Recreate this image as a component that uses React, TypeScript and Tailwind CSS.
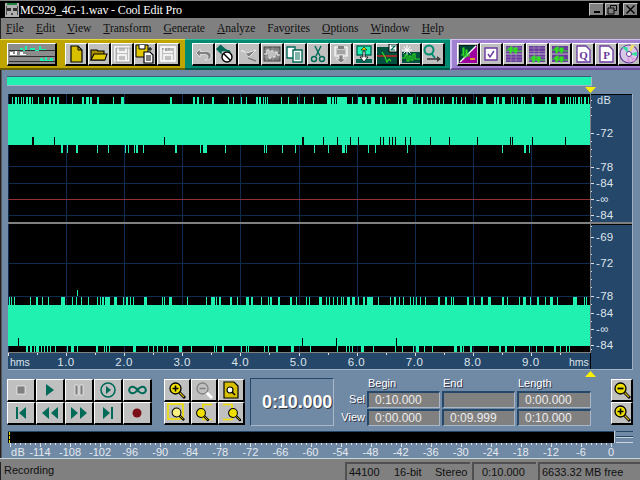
import type { ReactNode } from 'react'

type Tick = number | [number, number]

const MINT = '#20f0b0'
const GRID = '#0f2c50'

const topUpper: Tick[] = [12, [15, 2], 18, 21, 23, [26, 2], [29, 2], 32, 38, 44, [49, 2], [53, 2], [57, 2], 72, [82, 2], [86, 3], [90, 2], [97, 2], 113, [121, 3], [170, 2], [193, 2], [197, 2], 203, [212, 2], 228, 233, 241, 246, [256, 2], [259, 2], 263, 265, 267, 281, 288, 297, 304, 313, [327, 4], [332, 2], 335, [337, 10], 352, [358, 4], [365, 2], [371, 4], [380, 2], 385, 398, [401, 2], [407, 6], 417, [421, 2], 427, 431, 435, 439, 443, [452, 2], 456, 461, 465, 476, [483, 3], [494, 2], [497, 2], [502, 3], 511, 513, 517, [521, 2], 524, [531, 3], [545, 2], [549, 2], [557, 3], 565, 568, 570, 573, 575, [578, 2], 581, [584, 2], 588]
const topNotch: Tick[] = [[32, 2], 54, 164, [302, 2], 323, 337, 350, 358, 380, 383, 389, 392, 395, 405, 410, 430, 449, 477, 510, 512, 532, 565]
const topLower: Tick[] = [[61, 2], [66, 2], [76, 2], 97, 108, 125, 128, 134, [136, 2], 143, [175, 2], 200, [203, 4], 225, 264, 266, 282, 295, 314, 328, [342, 3], 346, 368, 375, 407, 502, [524, 2], 529, 531]
const botUpper: Tick[] = [9, 11, 14, 30, [36, 2], 42, 48, [61, 4], 72, 76, 81, 88, 97, 100, [102, 2], [105, 5], [114, 3], 123, [126, 2], 130, 133, [144, 3], 162, 164, [169, 3], 182, 187, 206, [211, 4], 216, [219, 2], [230, 2], 237, 240, [246, 3], [251, 2], 261, 268, [270, 2], [278, 2], [290, 2], 296, 306, 309, [319, 3], 326, 329, 333, 337, 341, 343, [347, 3], [352, 3], [357, 2], [363, 2], [367, 6], 378, 390, [394, 2], 399, 403, 410, 413, 416, 420, 425, [438, 2], [445, 2], 451, 453, [467, 2], 474, [481, 2], [488, 3], [502, 2], 507, 519, [523, 3], 530, [537, 2], 545, [550, 3], 557, [573, 3], 576, 584, 586]
const botNotch: Tick[] = [18, 302, 336, 396]
const botLower: Tick[] = [[26, 2], [30, 2], 34, [36, 3], 41, 44, 47, 50, 55, 67, [71, 3], 77, [96, 2], 104, 106, 109, [133, 3], 148, 153, 157, 163, 167, [179, 3], 182, 191, 214, 216, [222, 2], 241, 246, 248, 264, 268, [276, 2], [291, 3], 310, 337, 346, 349, 352, 357, [361, 3], 373, 395, 402, 413, [416, 3], 424, 432, [454, 3], [460, 2], 463, [470, 2], 473, 488, [499, 2], [505, 2], 514, 529, 536, 543, [554, 2], 560, 566, 569]

const gridX = [8, 66, 124, 182, 240, 299, 357, 415, 473, 531]

function TickRects({ ticks, y, h, fill }: { ticks: Tick[]; y: number; h: number; fill: string }) {
  return (
    <>
      {ticks.map((t, i) => {
        const x = typeof t === 'number' ? t : t[0]
        const w = typeof t === 'number' ? 1 : t[1]
        return <rect key={i} x={x - 8} y={y} width={w} height={h} fill={fill} />
      })}
    </>
  )
}

function Waveform() {
  // coords: y is screen y minus 94
  return (
    <svg width="582" height="259" viewBox="0 0 582 259" shapeRendering="crispEdges" className="block bg-black">
      <TickRects ticks={topUpper} y={3} h={7} fill={MINT} />
      <TickRects ticks={topLower} y={51} h={8} fill={MINT} />
      <TickRects ticks={botUpper} y={203} h={8} fill={MINT} />
      <TickRects ticks={botLower} y={252} h={6} fill={MINT} />
      <rect x="69" y="196" width="1" height="7" fill={MINT} />
      {gridX.map((x) => (
        <rect key={x} x={x - 8} y="0" width="1" height="258" fill={GRID} />
      ))}
      {[72, 89, 121, 169, 202].map((y) => (
        <rect key={y} x="0" y={y} width="582" height="1" fill={GRID} />
      ))}
      <rect x="0" y="105" width="582" height="1" fill="#903030" />
      <rect x="0" y="10" width="582" height="41" fill={MINT} />
      <rect x="0" y="211" width="582" height="41" fill={MINT} />
      <TickRects ticks={topNotch} y={43} h={8} fill="#000" />
      <TickRects ticks={botNotch} y={244} h={8} fill="#000" />
      <rect x="0" y="128" width="582" height="2" fill="#808080" />
      <rect x="0" y="258" width="582" height="1" fill="#808080" />
    </svg>
  )
}

function DbScale() {
  const labels: [string, number][] = [
    ['-72', 39],
    ['-78', 73],
    ['-84', 89],
    ['-∞', 105],
    ['-84', 121],
    ['-69', 143],
    ['-72', 169],
    ['-78', 202],
    ['-84', 219],
    ['-∞', 235],
    ['-84', 251],
  ]
  const dots = [6, 13, 21, 47, 55, 62, 81, 97, 113, 126, 132, 152, 160, 177, 185, 193, 210, 227, 243, 255]
  return (
    <svg width="41" height="259" viewBox="0 0 41 259" className="block bg-[#25476a] font-['Liberation_Sans',sans-serif]">
      <rect width="41" height="1" fill="#000" />
      <rect y="130" width="41" height="1" fill="#000" />
      <rect y="128" width="41" height="2" fill="#808080" />
      {dots.map((y) => (
        <rect key={y} x="0" y={y} width="1" height="1" fill="#e0e0e0" shapeRendering="crispEdges" />
      ))}
      <text x="6" y="10" fontSize="11" fill="#dde4ea" letterSpacing="0.5">dB</text>
      {labels.map(([t, y], i) => (
        <g key={i}>
          <rect x="0" y={y} width="3" height="1" fill="#e0e0e0" shapeRendering="crispEdges" />
          <text x="5" y={y + 4} fontSize="11.5" fill="#dde4ea" letterSpacing="0.3">{t}</text>
        </g>
      ))}
    </svg>
  )
}

function TimeRuler() {
  const labels = ['1.0', '2.0', '3.0', '4.0', '5.0', '6.0', '7.0', '8.0', '9.0']
  return (
    <svg width="582" height="16" viewBox="0 0 582 16" className="block bg-[#25476a] font-['Liberation_Sans',sans-serif]" shapeRendering="crispEdges">
      {Array.from({ length: 20 }, (_, i) => {
        const x = i * 29.05
        return <rect key={i} x={Math.round(x)} y="0" width="1" height={i % 2 === 0 ? 3 : 2} fill="#e0e0e0" />
      })}
      <text x="2" y="13" fontSize="10.5" fill="#dde4ea">hms</text>
      <text x="561" y="13" fontSize="10.5" fill="#dde4ea">hms</text>
      {labels.map((t, i) => (
        <text key={t} x={58 + i * 58.1} y="13" fontSize="11.5" fill="#dde4ea" textAnchor="middle" letterSpacing="0.5">{t}</text>
      ))}
    </svg>
  )
}

function MeterRuler() {
  const labels = ['-114', '-108', '-102', '-96', '-90', '-84', '-78', '-72', '-66', '-60', '-54', '-48', '-42', '-36', '-30', '-24', '-18', '-12', '-6', '0']
  return (
    <svg width="640" height="15" viewBox="0 0 640 15" className="block font-['Liberation_Sans',sans-serif]">
      {Array.from({ length: 121 }, (_, i) => (
        <rect key={i} x={Math.round(10 + i * 5.01)} y="0" width="1" height={i % 6 === 0 ? 4 : 2} fill="#d8dfe6" shapeRendering="crispEdges" />
      ))}
      <text x="11" y="12.500" fontSize="11" fill="#e4e9ee" letterSpacing="0.4">dB</text>
      {labels.map((t, i) => (
        <text key={t} x={40 + i * 30.05} y="12.500" fontSize="11" fill="#e4e9ee" textAnchor="middle">{t}</text>
      ))}
    </svg>
  )
}

function Btn({ children, className = 'w-[23px] h-[23px]' }: { children: ReactNode; className?: string }) {
  return (
    <div className={`${className} box-border flex shrink-0 items-center justify-center overflow-hidden border-t border-l border-t-white border-l-white border-r-2 border-b-2 border-r-black border-b-black bg-[#c0c0c0]`}>
      {children}
    </div>
  )
}

function Ico({ children, size = 18, box = 18 }: { children: ReactNode; size?: number; box?: number }) {
  return (
    <svg width={size} height={size} viewBox={`0 0 ${box} ${box}`} className="block">
      {children}
    </svg>
  )
}

const TEAL = '#006a58'
const PUR = '#6a3aa0'

function Disk({ fill, stroke }: { fill: string; stroke: string }) {
  return (
    <>
      <path d="M2 2h14v14H2z" fill={fill} stroke={stroke} strokeWidth="1.5" />
      <path d="M5 2v5h8V2M5 16v-6h8v6" fill="none" stroke={stroke} strokeWidth="1.5" />
    </>
  )
}

function Glass({ fill = '#f0e000', sign }: { fill?: string; sign?: string }) {
  return (
    <>
      <path d="M11 11l6 6" stroke="#000" strokeWidth="3" />
      <path d="M11 11l5 5" stroke="#d0b000" strokeWidth="1.2" />
      <circle cx="7.5" cy="7.5" r="5.5" fill={fill} stroke="#000" strokeWidth="1.3" />
      {sign === 'plus' && <path d="M4.5 7.5h6M7.5 4.5v6" stroke="#000" strokeWidth="1.6" />}
      {sign === 'minus' && <path d="M4.5 7.5h6" stroke="#000" strokeWidth="1.8" />}
    </>
  )
}

function PurpleWave({ a, b }: { a: boolean; b: boolean }) {
  const on = 'M1 5h3V3h1v5h1V2h1v4h2V3h1v5h1V3h1v3h5'
  return (
    <Ico>
      <rect x="1" y="1" width="16" height="7.5" fill={PUR} />
      <rect x="1" y="9.5" width="16" height="7.5" fill={PUR} />
      <path d="M1 3h16M1 6.5h16M1 12h16M1 15h16M6 1v16M11 1v16" stroke="#c0c0c0" strokeWidth="0.6" opacity={a && b ? 0 : 0.7} />
      {a && <path d={on} fill="none" stroke="#30e020" strokeWidth="1.2" />}
      {b && <path d={on} transform="translate(0 9)" fill="none" stroke="#30e020" strokeWidth="1.2" />}
    </Ico>
  )
}

function YellowTools() {
  return (
    <>
      <Btn className="w-[50px] h-[23px] !bg-[#8c8c8c]">
        <svg width="46" height="18" viewBox="0 0 46 18" className="block" shapeRendering="crispEdges">
          <path d="M0 5h46M0 11h46M0 16h46" stroke="#303030" />
          <path d="M11 3h3v3h2V1h2v4h3V3h5v3h4V1h2v3h5v1H11z" fill={MINT} />
          <path d="M31 13h3v2h2v-3h2v3h3v-2h3v3H31z" fill={MINT} />
          <path d="M1 7h3v2h2V6h2v4h3V7h3v2h3v1H1z" fill="#fff" />
        </svg>
      </Btn>
      <div className="w-[8px]" />
      <Btn>
        <Ico><path d="M4 1h7l4 4v12H4z" fill="#d8c000" stroke="#000" strokeWidth="1.2" /><path d="M11 1v4h4" fill="none" stroke="#000" /></Ico>
      </Btn>
      <Btn>
        <Ico><path d="M1 5h6l1 1h6v9H1z" fill="#a89000" stroke="#000" strokeWidth="1.1" /><path d="M4 9h13l-2 6H1z" fill="#e0c800" stroke="#000" strokeWidth="1.1" /></Ico>
      </Btn>
      <Btn><Ico><Disk fill="none" stroke="#fff" /><path d="M3 3h14v14H3z" fill="none" stroke="#808080" strokeWidth="0.6" /></Ico></Btn>
      <Btn>
        <Ico box={20} size={20}>
          <path d="M1 1h12v12H1z" fill="#e0c800" stroke="#000" />
          <path d="M4 1v4h6V1" fill="#fff" stroke="#000" />
          <path d="M9 8h6l3 3v8H9z" fill="#fff" stroke="#000" strokeWidth="1.2" />
          <path d="M11 12h5M11 14h5M11 16h5" stroke="#000" />
          <path d="M15 3v4M13 5h4" stroke="#000" />
        </Ico>
      </Btn>
      <Btn>
        <Ico><Disk fill="none" stroke="#fff" /><path d="M4 5V3M7 6V3M10 5V3M13 6V3" stroke="#808080" /></Ico>
      </Btn>
    </>
  )
}

function TealTools() {
  return (
    <>
      <Btn><Ico><path d="M6 4L2 8l4 4V9.5h5c2 0 3 1 3 2.5s-2 3-3 3c3 0 6-1 6-4.500S13 6 10 6.500H6z" fill="#808080" stroke="#fff" strokeWidth="0.6" /></Ico></Btn>
      <Btn>
        <Ico box={20} size={20}>
          <path d="M5 1L1 5l4 4V6.500h6c2 0 3 1 3 2" fill="#006a58" stroke="#006a58" strokeWidth="1.4" />
          <circle cx="11" cy="13" r="5" fill="#fff" stroke="#000" strokeWidth="1.4" />
          <path d="M7.500 9.500l7 7" stroke="#000" strokeWidth="1.4" />
        </Ico>
      </Btn>
      <Btn><Ico><path d="M1 6c4-1 5 5 8 6l7-7-6 2-3 1c-2-1-4-3-6-2z" fill="#808080" stroke="#fff" strokeWidth="0.7" /><path d="M8 13l8 3" stroke="#808080" strokeWidth="1.5" /></Ico></Btn>
      <Btn><Ico><rect x="1" y="2" width="16" height="14" fill="#808080" stroke="#404040" /><path d="M1 9h3V5h2v8h2V6h2v6h2V7h2v3h3" fill="none" stroke="#fff" /><path d="M4 2v14M10 2v14M1 6h16M1 12h16" stroke="#c0c0c0" strokeWidth="0.4" /></Ico></Btn>
      <Btn>
        <Ico>
          <path d="M1 2h8v11H1z" fill="#fff" stroke="#006a58" strokeWidth="1.4" />
          <path d="M7 5h9v12H7z" fill="#fff" stroke="#006a58" strokeWidth="1.4" />
          <path d="M9 8h5M9 10h5M9 12h5M9 14h5" stroke="#006a58" />
        </Ico>
      </Btn>
      <Btn>
        <Ico>
          <path d="M6 1l5 10M12 1L7 11" stroke="#006a58" strokeWidth="1.4" />
          <circle cx="5" cy="14" r="2.500" fill="none" stroke="#006a58" strokeWidth="1.4" />
          <circle cx="13" cy="14" r="2.500" fill="none" stroke="#006a58" strokeWidth="1.4" />
        </Ico>
      </Btn>
      <Btn>
        <Ico>
          <path d="M3 2h12v9H3z" fill="#c8c8c8" stroke="#fff" strokeWidth="1.2" />
          <path d="M6 1h6v3H6z" fill="#808080" />
          <path d="M5 6h8M5 8h8" stroke="#808080" />
          <path d="M7 10h4v4h3l-5 4-5-4h3z" fill="#808080" stroke="#fff" strokeWidth="0.6" />
        </Ico>
      </Btn>
      <Btn>
        <Ico box={20} size={20}>
          <path d="M3 2h14v9H3z" fill={MINT} stroke="#006a58" strokeWidth="1.4" />
          <path d="M7 6l3-3 3 3z" fill="#f0e000" stroke="#000" strokeWidth="0.6" />
          <path d="M2 15h16v4H2z" fill="#006a58" />
          <path d="M9 7h2v6h3l-4 5-4-5h3z" fill="#fff" stroke="#000" strokeWidth="0.8" />
        </Ico>
      </Btn>
      <Btn>
        <Ico box={20} size={20}>
          <path d="M0 3h20v17H0z" fill="#00503f" />
          <path d="M0 12h20" stroke="#e02020" strokeWidth="1.4" />
          <path d="M5 8l3 5 2 5 2-3 2 2" fill="none" stroke="#30e020" strokeWidth="1.1" />
          <path d="M12 0h8v8h-8z" fill="#fff" stroke="#000" />
          <path d="M14 2h4l-4 4h4" fill="none" stroke="#006a58" strokeWidth="1.1" />
        </Ico>
      </Btn>
      <Btn>
        <Ico box={20} size={20}>
          <path d="M2 8h18v11H2z" fill="#00503f" />
          <path d="M7 1v10M2 6h10M3.500 2.500l7 7M10.500 2.500l-7 7" stroke="#fff" strokeWidth="1" />
          <path d="M2 14h3v-3h2v6h2v-5h2v4h2v-6h2v5h5" fill="none" stroke="#30e020" strokeWidth="1.1" />
        </Ico>
      </Btn>
      <Btn>
        <Ico box={20} size={20}>
          <circle cx="6" cy="6" r="4.500" fill="none" stroke="#008c70" strokeWidth="2" />
          <path d="M8 9l4 5" stroke="#008c70" strokeWidth="2" />
          <path d="M4 15h12" stroke="#404040" strokeWidth="1.6" />
          <path d="M14 12l4 3-4 3z" fill="#404040" />
        </Ico>
      </Btn>
    </>
  )
}

function PurpleTools() {
  return (
    <>
      <Btn>
        <Ico>
          <path d="M0 0h18v18H0z" fill="#00403a" stroke="#000" />
          <path d="M0 18L18 0v18z" fill="#a000a0" />
          <path d="M1 17L17 1" stroke="#fff" strokeWidth="1.2" />
          <path d="M2 10h2V3h1v9h2V5h1v6h2V8" fill="none" stroke="#30e020" strokeWidth="1.1" />
          <path d="M11 14h5" stroke="#f0e000" strokeWidth="1.4" />
        </Ico>
      </Btn>
      <Btn>
        <Ico>
          <path d="M3 3h12v12H3z" fill="#fff" stroke={PUR} strokeWidth="1.4" />
          <path d="M6 9l2 3 4-6" fill="none" stroke={PUR} strokeWidth="1.4" />
        </Ico>
      </Btn>
      <Btn><PurpleWave a b={false} /></Btn>
      <Btn><PurpleWave a={false} b /></Btn>
      <Btn><PurpleWave a b /></Btn>
      <Btn>
        <Ico>
          <path d="M3 1h9l4 4v12H3z" fill="#fff" stroke={PUR} strokeWidth="1.3" />
          <text x="9.500" y="14" fontSize="11" textAnchor="middle" fill={PUR} fontWeight="700" fontFamily="Liberation Serif, serif">Q</text>
        </Ico>
      </Btn>
      <Btn>
        <Ico>
          <path d="M3 1h9l4 4v12H3z" fill="#fff" stroke={PUR} strokeWidth="1.3" />
          <text x="9.500" y="14" fontSize="11" textAnchor="middle" fill={PUR} fontWeight="700" fontFamily="Liberation Serif, serif">P</text>
        </Ico>
      </Btn>
      <Btn>
        <Ico box={20} size={20}>
          <circle cx="10" cy="10" r="9" fill="#d8c8e8" stroke={PUR} strokeWidth="1.2" />
          <path d="M10 10L3 3h5zM10 10l8-2v4z" fill="#30e0a0" />
          <path d="M10 10l-3 8h4zM10 10l7 6-3 2z" fill="#e0a0e0" />
          <path d="M10 10L12 1h4z" fill="#f0e060" />
          <circle cx="10" cy="10" r="2.500" fill="#fff" stroke={PUR} />
        </Ico>
      </Btn>
    </>
  )
}

function Transport() {
  const gray = '#808080'
  return (
    <div className="grid grid-cols-[repeat(5,29px)] grid-rows-[repeat(2,23px)]">
      <Btn className="w-[29px] h-[23px]"><Ico size={16} box={16}><rect x="4" y="4" width="8" height="8" fill={gray} stroke="#fff" strokeWidth="0.6" /></Ico></Btn>
      <Btn className="w-[29px] h-[23px]"><Ico size={16} box={16}><path d="M4 2l8 6-8 6z" fill={TEAL} /></Ico></Btn>
      <Btn className="w-[29px] h-[23px]"><Ico size={16} box={16}><path d="M4 3h3v10H4zM9 3h3v10H9z" fill={gray} stroke="#fff" strokeWidth="0.6" /></Ico></Btn>
      <Btn className="w-[29px] h-[23px]"><Ico size={18} box={18}><circle cx="9" cy="9" r="7" fill="none" stroke={TEAL} strokeWidth="1.6" /><path d="M7 5l5 4-5 4z" fill={TEAL} /></Ico></Btn>
      <Btn className="w-[29px] h-[23px]"><svg width="19" height="10" viewBox="0 0 22 12"><path d="M11 6C8 2 6 2 5 2a4 4 0 0 0 0 8c1 0 3 0 6-4s5-4 6-4a4 4 0 0 1 0 8c-1 0-3 0-6-4z" fill="none" stroke={TEAL} strokeWidth="2.400" /></svg></Btn>
      <Btn className="w-[29px] h-[23px]"><Ico size={16} box={16}><path d="M3 2h2v12H3zM13 2v12L6 8z" fill={TEAL} /></Ico></Btn>
      <Btn className="w-[29px] h-[23px]"><svg width="20" height="14" viewBox="0 0 20 14"><path d="M9 1v12L2 7zM18 1v12l-7-6z" fill={TEAL} /></svg></Btn>
      <Btn className="w-[29px] h-[23px]"><svg width="20" height="14" viewBox="0 0 20 14"><path d="M2 1v12l7-6zM11 1v12l7-6z" fill={TEAL} /></svg></Btn>
      <Btn className="w-[29px] h-[23px]"><Ico size={16} box={16}><path d="M3 2v12l7-6zM11 2h2v12h-2z" fill={TEAL} /></Ico></Btn>
      <Btn className="w-[29px] h-[23px]"><Ico size={16} box={16}><circle cx="8" cy="8" r="4.500" fill="#7c1018" /></Ico></Btn>
    </div>
  )
}

function ZoomTools() {
  const b = 'w-[27px] h-[23px]'
  return (
    <div className="grid grid-cols-[repeat(3,27px)] grid-rows-[repeat(2,23px)]">
      <Btn className={b}><Ico><Glass sign="plus" /></Ico></Btn>
      <Btn className={b}><Ico><path d="M11 11l6 6" stroke="#fff" strokeWidth="3" /><circle cx="7.500" cy="7.500" r="5.500" fill="none" stroke="#808080" strokeWidth="1.300" /><path d="M4.500 7.500h6" stroke="#808080" strokeWidth="1.500" /></Ico></Btn>
      <Btn className={b}>
        <Ico>
          <path d="M2 1h10l4 4v12H2z" fill="#d8c000" stroke="#000" strokeWidth="1.200" />
          <circle cx="8" cy="9" r="3" fill="#fff" stroke="#000" strokeWidth="1.200" />
          <path d="M10 11l3 3" stroke="#000" strokeWidth="1.600" />
        </Ico>
      </Btn>
      <Btn className={b}>
        <Ico box={20} size={20}>
          <rect x="1" y="1" width="15" height="15" fill="none" stroke="#f0e000" strokeWidth="1.600" />
          <g transform="translate(3.500 3.500) scale(0.8)"><Glass fill="#f8f080" /></g>
        </Ico>
      </Btn>
      <Btn className={b}>
        <Ico box={20} size={20}>
          <path d="M18 1.500H9v15h9" fill="none" stroke="#f0e000" strokeWidth="1.600" />
          <g transform="translate(1 4) scale(0.8)"><Glass /></g>
        </Ico>
      </Btn>
      <Btn className={b}>
        <Ico box={20} size={20}>
          <path d="M2 1.500h9v15H2" fill="none" stroke="#f0e000" strokeWidth="1.600" />
          <g transform="translate(6 4) scale(0.8)"><Glass /></g>
        </Ico>
      </Btn>
    </div>
  )
}

function Field({ children }: { children?: ReactNode }) {
  return (
    <div className="box-border flex h-[17px] items-center border-t-2 border-l-2 border-t-[#25476a] border-l-[#25476a] border-r border-b border-r-[#a8b8c8] border-b-[#a8b8c8] bg-[#808080] pl-[6px] text-[12px] text-[#ececec]">
      {children}
    </div>
  )
}

function Info() {
  const label = 'text-[11px] leading-[13px] text-white [text-shadow:1px_1px_0_#334]'
  return (
    <div className="-mt-[2px] grid grid-cols-[31px_73px_73px_74px] grid-rows-[13px_17px_17px] gap-x-[2px] gap-y-[1px]">
      <div />
      <div className={`${label} pl-[1px]`}>Begin</div>
      <div className={`${label} pl-[1px]`}>End</div>
      <div className={`${label} pl-[1px]`}>Length</div>
      <div className={`${label} self-center text-right`}>Sel</div>
      <Field>0:10.000</Field>
      <Field />
      <Field>0:00.000</Field>
      <div className={`${label} self-center text-right`}>View</div>
      <Field>0:00.000</Field>
      <Field>0:09.999</Field>
      <Field>0:10.000</Field>
    </div>
  )
}

const menu: [string, string, string][] = [
  ['', 'F', 'ile'],
  ['', 'E', 'dit'],
  ['', 'V', 'iew'],
  ['', 'T', 'ransform'],
  ['', 'G', 'enerate'],
  ['', 'A', 'nalyze'],
  ['Fav', 'o', 'rites'],
  ['', 'O', 'ptions'],
  ['', 'W', 'indow'],
  ['', 'H', 'elp'],
]

function WinBtn({ children }: { children: ReactNode }) {
  return (
    <div className="box-border flex h-[13px] w-[15px] items-end justify-center border-t border-l border-t-[#c0c0c0] border-l-[#c0c0c0] border-r border-b border-r-black border-b-black bg-[#808080]">
      {children}
    </div>
  )
}

export default function App() {
  return (
    <div className="flex h-[480px] w-[640px] flex-col overflow-hidden bg-[#708aa6] font-['Liberation_Sans',sans-serif]">
      {/* title bar */}
      <div className="box-border flex h-[18px] items-center border-t border-t-[#808080] bg-black pl-[5px]">
        <svg width="14" height="14" viewBox="0 0 14 14" className="block shrink-0">
          <rect width="14" height="14" fill="#b0b0b0" />
          <rect x="2" width="10" height="2" fill="#208040" />
          <path d="M2 5h4v3H2zM8 5h4v3H8z" fill="#303030" />
          <path d="M6 10h2v2H6zM1 3h1v9H1zM12 3h1v9h-1z" fill="#505050" />
        </svg>
        <span className="ml-[1px] font-['Liberation_Serif',serif] text-[12px] leading-[16px] tracking-[-0.15px] text-white">MC929_4G-1.wav - Cool Edit Pro</span>
        <div className="ml-auto flex items-center pr-[2px]">
          <WinBtn><div className="mb-[2px] h-[2px] w-[6px] bg-black" /></WinBtn>
          <div className="w-[1px]" />
          <WinBtn>
            <svg width="11" height="10" viewBox="0 0 11 10" className="block"><path d="M3.500 2.500V.5h6v5h-2M1 3h6v6H1z" fill="none" stroke="#000" /></svg>
          </WinBtn>
          <div className="w-[3px]" />
          <WinBtn>
            <svg width="11" height="10" viewBox="0 0 11 10" className="block"><path d="M1.500 0.500l8 8M9.500 0.500l-8 8" stroke="#000" strokeWidth="1.400" /></svg>
          </WinBtn>
        </div>
      </div>

      {/* menu */}
      <div className="flex h-[21px] items-center gap-[12px] bg-[#808080] pl-[6px] font-['Liberation_Serif',serif] text-[11.500px] text-[#101010] shadow-[inset_1px_0_0_#222]">
        {menu.map(([pre, key, rest]) => (
          <span key={pre + key + rest}>
            {pre}
            <span className="underline">{key}</span>
            {rest}
          </span>
        ))}
      </div>

      {/* toolbars */}
      <div className="flex h-[31px]">
        <div className="box-border flex w-[185px] items-center border-t border-t-[#e8d840] border-b-2 border-b-[#6a6000] bg-[#bfa500] pl-[7px]">
          <YellowTools />
        </div>
        <div className="box-border flex w-[265px] items-center border-t border-t-[#30c0a0] border-b-2 border-b-[#00584a] bg-[#008a72] pl-[7px]">
          <TealTools />
        </div>
        <div className="box-border flex w-[190px] items-center border-t border-l-2 border-t-[#d0c0f0] border-l-[#d0c0f0] border-b-2 border-b-[#6a4a9a] bg-[#a080d0] pl-[5px]">
          <PurpleTools />
        </div>
      </div>

      {/* main area */}
      <div className="flex min-h-0 flex-1 flex-col pt-[6px] shadow-[inset_1px_0_0_#222,inset_2px_0_0_#555]">
        <div className="ml-[7px] box-border h-[10px] w-[585px] border-t border-t-[#3a5a80] border-b border-b-[#a8b8c8] border-r border-r-[#a8b8c8] bg-[#20f0b0]" />
        <div className="flex h-[8px] items-end pl-[585px] pb-[1px]">
          <svg width="11" height="6" viewBox="0 0 11 6" className="block"><path d="M0 0h11L5.500 6z" fill="#f8f000" /></svg>
        </div>
        <div className="ml-[8px] flex">
          <Waveform />
          <div className="w-[1px] bg-[#808080]" />
          <DbScale />
          <div className="w-[1px] bg-[#a0b0c0]" />
        </div>
        <div className="ml-[8px] flex h-[16px]">
          <TimeRuler />
          <div className="w-[1px] bg-black" />
          <div className="w-[41px] bg-[#25476a]" />
          <div className="w-[1px] bg-[#a0b0c0]" />
        </div>
        <div className="flex h-[10px] flex-col pl-[585px]">
          <div className="-ml-[577px] h-[1px] w-[625px] bg-[#a0b0c0]" />
          <svg width="11" height="6" viewBox="0 0 11 6" className="mt-[1px] block"><path d="M5.500 0L11 6H0z" fill="#f8f000" /></svg>
        </div>

        <div className="flex h-[47px] pl-[7px]">
          <Transport />
          <div className="ml-[12px]"><ZoomTools /></div>
          <div className="ml-[5px] -mt-[1px] box-border flex h-[48px] w-[84px] items-center border-t border-l border-t-[#25476a] border-l-[#25476a] border-r border-b border-r-[#a8b8c8] border-b-[#a8b8c8] pl-[11px] text-[18px] font-bold tracking-[-0.1px] text-white [text-shadow:1px_1px_0_#303840]">
            0:10.000
          </div>
          <Info />
          <div className="ml-[20px] flex flex-col">
            <Btn className="w-[22px] h-[23px]"><Ico><Glass sign="minus" /></Ico></Btn>
            <Btn className="w-[22px] h-[23px]"><Ico><Glass sign="plus" /></Ico></Btn>
          </div>
        </div>

        <div className="mt-[5px] ml-[8px] flex h-[12px] items-stretch">
          <div className="box-border flex w-[606px] border-t border-t-[#25476a] bg-black pl-[1px]">
            <div className="h-full w-0 border-l border-dashed border-l-[#f0e000]" />
          </div>
          <div className="w-[1px] bg-[#c8d4de]" />
          <div className="ml-[1px] box-border flex w-[17px] flex-col border-t border-t-[#25476a] border-b border-b-[#c8d4de]">
            <div className="mt-[4px] h-[1px] bg-[#25476a]" />
            <div className="h-[1px] bg-[#c8d4de]" />
          </div>
        </div>
        <div className="box-border h-[16px] border-b border-b-[#c8d4de]">
          <MeterRuler />
        </div>
      </div>

      {/* status bar */}
      <div className="flex h-[21px] items-end bg-[#808080] text-[11px] leading-[17px] text-[#101010]">
        <div className="h-[18px] w-[345px] pl-[4px] shadow-[inset_1px_0_0_#222]">Recording</div>
        <div className="box-border flex h-[18px] w-[125px] border-t-2 border-l-2 border-t-[#505050] border-l-[#505050] pl-[2px]">
          <span className="w-[45px]">44100</span>
          <span className="w-[41px]">16-bit</span>
          <span>Stereo</span>
        </div>
        <div className="ml-[2px] box-border h-[18px] w-[64px] border-t-2 border-l-2 border-t-[#505050] border-l-[#505050] pl-[8px]">0:10.000</div>
        <div className="ml-[2px] box-border h-[18px] w-[102px] border-t-2 border-l-2 border-t-[#505050] border-l-[#505050] pl-[2px]">6633.32 MB free</div>
      </div>
    </div>
  )
}
